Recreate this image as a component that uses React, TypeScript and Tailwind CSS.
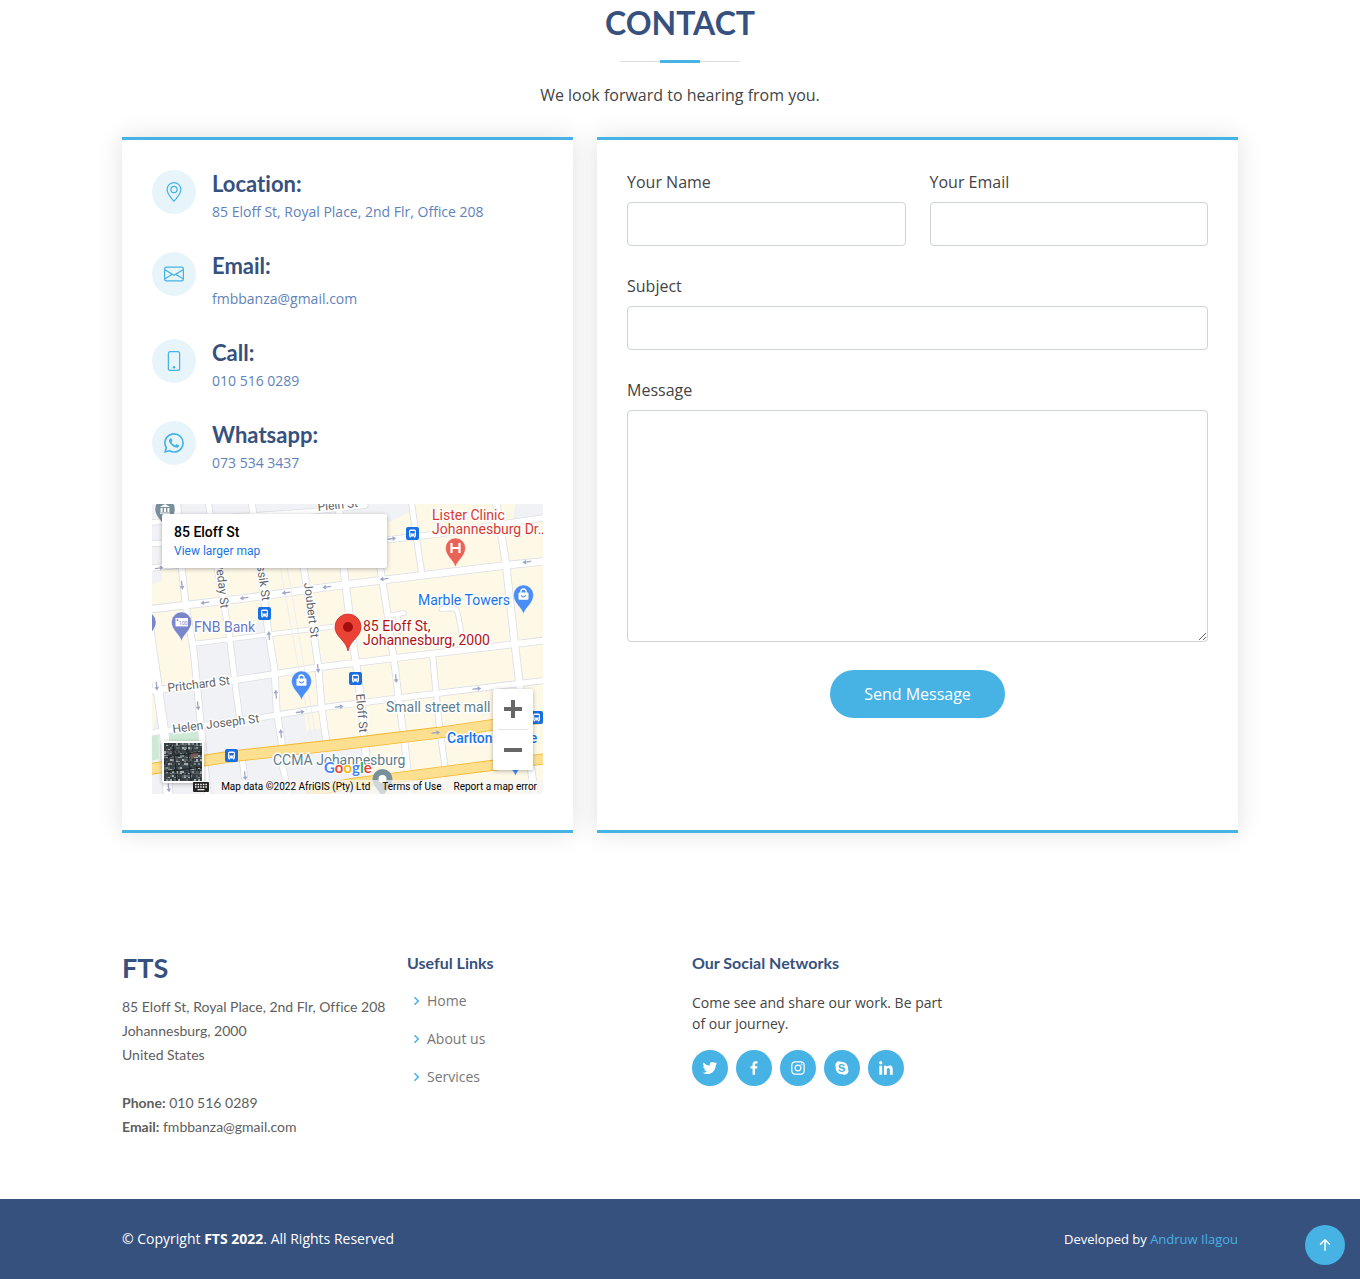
import type { ReactNode } from "react";
import {
  BsArrowUpShort,
  BsEnvelope,
  BsGeoAlt,
  BsPhone,
  BsWhatsapp,
} from "react-icons/bs";
import {
  BiChevronRight,
  BiLogoFacebook,
  BiLogoInstagram,
  BiLogoLinkedin,
  BiLogoSkype,
  BiLogoTwitter,
} from "react-icons/bi";

const contacts = [
  { icon: BsGeoAlt, title: "Location:", text: "85 Eloff St, Royal Place, 2nd Flr, Office 208", gap: "mt-1" },
  { icon: BsEnvelope, title: "Email:", text: "fmbbanza@gmail.com", gap: "mt-[9px]" },
  { icon: BsPhone, title: "Call:", text: "010 516 0289", gap: "mt-1" },
  { icon: BsWhatsapp, title: "Whatsapp:", text: "073 534 3437", gap: "mt-1" },
];

const socials = [
  { icon: BiLogoTwitter, label: "Twitter" },
  { icon: BiLogoFacebook, label: "Facebook" },
  { icon: BiLogoInstagram, label: "Instagram" },
  { icon: BiLogoSkype, label: "Skype" },
  { icon: BiLogoLinkedin, label: "LinkedIn" },
];

// Road geometry is drawn at three times the map's size and scaled down.
const roads = [
  { d: "M0 55 L480 22 L640 5", w: 14 },
  { d: "M0 118 L700 108 L860 90 L1060 58 L1173 42", w: 16 },
  { d: "M0 192 L80 184", w: 16 },
  { d: "M120 420 L360 390 L560 366", w: 12 },
  { d: "M0 560 L250 528 L500 490 L730 462 L1090 420 L1173 410", w: 18 },
  { d: "M0 686 L330 640 L520 610 L740 582 L1173 530", w: 16 },
  { d: "M-8 380 L18 560 L38 700 L48 870", w: 26 },
  { d: "M76 0 L90 200 L102 310 L125 440 L150 700 L168 880", w: 18 },
  { d: "M170 0 L195 190 L230 380 L252 560 L264 650", w: 16 },
  { d: "M300 0 L325 200 L347 370 L368 500 L374 620 L392 735", w: 18 },
  { d: "M438 100 L460 220 L498 480 L510 620 L524 720", w: 18 },
  { d: "M560 0 L576 200 L600 400 L614 490 L628 600 L644 780", w: 20 },
  { d: "M680 160 L702 300 L730 500 L740 582 L758 720 L775 870", w: 18 },
  { d: "M778 -10 L790 80 L808 200", w: 16 },
  { d: "M842 455 L860 650 L882 810", w: 16 },
  { d: "M1032 -10 L1062 180 L1086 400 L1105 560 L1135 780 L1150 880", w: 20 },
  { d: "M270 760 L284 870", w: 16 },
  { d: "M392 790 L412 870", w: 16 },
  { d: "M0 315 L270 284 L580 242 L830 212 L1060 184 L1173 172", w: 20 },
  { d: "M716 334 L756 327", w: 12 },
  { d: "M738 335 L742 382", w: 12 },
  { d: "M868 315 L904 313 Q914 315 918 330 L936 430", w: 12 },
];

const highways = [
  { d: "M-5 795 L240 757 L560 722 L860 686 L1180 640", w: 30 },
  { d: "M480 862 L600 838 L850 806 L1180 764", w: 28 },
];

const arrows = [
  [158, 296, 172], [276, 282, 172], [402, 266, 172], [524, 249, 172], [696, 225, 172], [1124, 174, 172],
  [22, 192, -8], [720, 104, -8], [90, 244, 84], [14, 547, 84], [138, 606, 84], [351, 394, -96],
  [372, 570, -96], [387, 688, -96], [498, 494, 84], [732, 524, 84], [445, 624, -7], [562, 608, -7],
  [975, 554, -7], [852, 686, -7], [279, 816, 84], [50, 852, 84],
];

function Pin({ x, y, color, children }: { x: number; y: number; color: string; children?: ReactNode }) {
  return (
    <g transform={`translate(${x} ${y})`}>
      <path d="M0 29 C-2 22 -10 18 -10 10 A10 10 0 0 1 10 10 C10 18 2 22 0 29 Z" fill={color} stroke="#fff" strokeWidth="0.4" />
      {children}
    </g>
  );
}

function Bus({ x, y }: { x: number; y: number }) {
  return (
    <g transform={`translate(${x} ${y})`}>
      <rect width="13" height="13" rx="2" fill="#1a6fe0" />
      <path d="M3 4.2 Q3 2.6 4.6 2.6 H8.4 Q10 2.6 10 4.2 V9.5 H9.2 V10.6 H8 V9.5 H5 V10.6 H3.8 V9.5 H3 Z" fill="#fff" />
      <path d="M4.2 4 H8.8 V6.4 H4.2 Z M4.2 7.6 h1 v1 h-1 Z M7.8 7.6 h1 v1 h-1 Z" fill="#1a6fe0" />
    </g>
  );
}

function Bag() {
  return (
    <g>
      <path d="M-2.6 8 V6.6 A2.6 2.6 0 0 1 2.6 6.6 V8" fill="none" stroke="#fff" strokeWidth="1.3" />
      <rect x="-5" y="7.4" width="10" height="7.4" rx="1" fill="#fff" />
      <path d="M-2.4 10.4 Q0 13.6 2.4 10.4" fill="none" stroke="#4a8df6" strokeWidth="1.1" />
    </g>
  );
}

function MapCanvas() {
  return (
    <svg
      viewBox="0 0 391 290"
      preserveAspectRatio="xMidYMid slice"
      className="block h-full w-full"
      role="img"
      aria-label="Map of 85 Eloff St, Johannesburg"
    >
      <g transform="scale(0.33333)">
        <rect width="1173" height="870" fill="#fef8e7" />
        <g fill="#f0f2f5">
          <path d="M0 0 H780 V20 L700 60 L0 120 Z" />
          <path d="M0 100 H60 V180 L0 190 Z M0 200 L30 200 V230 L0 240 Z" />
          <path d="M1090 0 H1173 V48 L1080 60 Z" />
          <path d="M120 430 L235 412 L345 340 L370 640 L520 612 L530 720 L640 720 L650 870 L0 870 L0 690 L30 560 L132 545 Z" />
        </g>
        <path d="M240 335 L345 320 L346 345 L240 380 Z" fill="#fef8e7" />
        <path d="M458 625 L515 615 L520 672 L462 680 Z" fill="#fef8e7" />
        <path d="M650 740 L1173 700 V870 H655 Z" fill="#fef8e7" />
        <path d="M0 694 H20 V765 L0 770 Z M52 686 L140 676 V730 H58 Z" fill="#ceead6" />
        <g fill="none" strokeLinejoin="round" strokeLinecap="round">
          {roads.map((r) => (
            <path key={r.d} d={r.d} stroke="#dcdfe5" strokeWidth={r.w + 5} />
          ))}
          {roads.map((r) => (
            <path key={r.d} d={r.d} stroke="#ffffff" strokeWidth={r.w} />
          ))}
          <path d="M385 190 L405 300 L430 440 L470 650 L488 748 M405 190 L425 300 L448 440 L484 650 L500 748" stroke="#eceef1" strokeWidth="3" />
          {highways.map((r) => (
            <path key={r.d} d={r.d} stroke="#f6b62f" strokeWidth={r.w + 5} />
          ))}
          {highways.map((r) => (
            <path key={r.d} d={r.d} stroke="#fde08f" strokeWidth={r.w} />
          ))}
          {arrows.map(([x, y, a]) => (
            <g key={`${x}-${y}`} transform={`translate(${x} ${y}) rotate(${a})`}>
              <path d="M-12 0 H4" stroke="#a0a6c8" strokeWidth="4" />
              <path d="M2 -7 L13 0 L2 7 Z" fill="#a0a6c8" />
            </g>
          ))}
        </g>
      </g>

      <Pin x={13} y={-5} color="#78909c">
        <path d="M-5 8 L0 5 L5 8 Z M-4.4 9 h2 v4 h-2 Z M-1 9 h2 v4 h-2 Z M2.4 9 h2 v4 h-2 Z M-5 13.6 h10 v1.2 h-10 Z" fill="#fff" />
      </Pin>
      <Pin x={-6} y={108} color="#7986cb" />
      <Pin x={29.5} y={108} color="#7986cb">
        <rect x="-6" y="6" width="12.5" height="8.4" fill="#fff" />
        <circle cx="-4" cy="8" r="0.9" fill="#7986cb" />
        <text x="-2.4" y="12.8" fontSize="5" fill="#7986cb">100</text>
      </Pin>
      <Pin x={149.5} y={167} color="#4a8df6"><Bag /></Pin>
      <Pin x={371.5} y={81} color="#4a8df6"><Bag /></Pin>
      <Pin x={303.5} y={34} color="#ea6358">
        <path d="M-4 5 V15 M4 5 V15 M-4 10 H4" fill="none" stroke="#fff" strokeWidth="2.2" />
      </Pin>
      <Pin x={363.5} y={243} color="#4a8df6" />
      <g transform="translate(230.5 265)">
        <path d="M0 29 C-2 22 -10 18 -10 10 A10 10 0 0 1 10 10 C10 18 2 22 0 29 Z" fill="#78909c" />
        <circle cx="0" cy="10" r="4" fill="#fff" />
      </g>
      <Bus x={254} y={23} />
      <Bus x={106} y={103} />
      <Bus x={197} y={168} />
      <Bus x={73} y={245} />
      <Bus x={378} y={207} />

      <g stroke="#ffffff" strokeWidth="3" strokeLinejoin="round" paintOrder="stroke" className="font-['Roboto',sans-serif]">
        <g fontSize="12" fill="#5f6368">
          <text transform="translate(166 7) rotate(-6)">Plein St</text>
          <text transform="translate(64 60) rotate(84)">veday St</text>
          <text transform="translate(105 62) rotate(82)">ssik St</text>
          <text transform="translate(152 79) rotate(83)">Joubert St</text>
          <text transform="translate(204 190) rotate(85)">Eloff St</text>
          <text transform="translate(16 188) rotate(-7)">Pritchard St</text>
          <text transform="translate(21 229) rotate(-7)">Helen Joseph St</text>
        </g>
        <g fontSize="14">
          <text x="280" y="16" fill="#d93a32">Lister Clinic</text>
          <text x="280" y="30" fill="#d93a32">Johannesburg Dr…</text>
          <text x="266" y="101" fill="#1a73e8">Marble Towers</text>
          <text x="42" y="128" fill="#6b78c4">FNB Bank</text>
          <text x="211" y="127" fill="#b31412">85 Eloff St,</text>
          <text x="211" y="141" fill="#b31412">Johannesburg, 2000</text>
          <text x="234" y="208" fill="#607d8b">Small street mall</text>
          <text x="121" y="261" fill="#607d8b">CCMA Johannesburg</text>
          <text x="295" y="239" fill="#1a73e8" fontWeight="500">Carlton Centre</text>
        </g>
      </g>

      <g>
        <path d="M196 147 C194 136 183 133 183 123 A13 13 0 0 1 209 123 C209 133 198 136 196 147 Z" fill="#ea4335" stroke="#c5221f" strokeWidth="0.7" />
        <circle cx="196" cy="123" r="5" fill="#a50e0e" />
      </g>
      <text x="172" y="269" fontSize="15" stroke="#ffffff" strokeWidth="2" paintOrder="stroke" className="font-['Lato',sans-serif] font-bold">
        <tspan fill="#4285f4">G</tspan>
        <tspan fill="#ea4335">o</tspan>
        <tspan fill="#fbbc04">o</tspan>
        <tspan fill="#4285f4">g</tspan>
        <tspan fill="#34a853">l</tspan>
        <tspan fill="#ea4335">e</tspan>
      </text>
    </svg>
  );
}

function SatelliteThumb() {
  const cells = Array.from({ length: 19 * 19 }, (_, i) => i);
  const shades = ["#3b464b", "#56646b", "#262c30", "#7b8c8e", "#3f4a4e", "#a3adac", "#30383c", "#5d5a59"];
  return (
    <svg viewBox="0 0 38 38" className="block h-full w-full" aria-hidden="true">
      <rect width="38" height="38" fill="#394246" />
      {cells.map((i) => {
        const x = i % 19;
        const y = Math.floor(i / 19);
        const k = (x * 7 + y * 13 + x * y * 5 + ((x * x + y * 3) % 11)) % shades.length;
        return <rect key={i} x={x * 2} y={y * 2} width={1 + (k % 2)} height={1 + ((k + y) % 2)} fill={shades[k]} />;
      })}
      <path d="M27 9 h7 v5 h-5 v2 h-2 Z" fill="#7d5b58" />
      <path d="M9 0 L13 38 M23 0 L27 38 M0 14 L38 9 M0 29 L38 24" stroke="#1b2023" strokeWidth="1" />
    </svg>
  );
}

function KeyboardIcon() {
  return (
    <svg viewBox="0 0 16 10" className="h-[10px] w-4" aria-hidden="true">
      <rect width="16" height="10" rx="1" fill="#222" />
      <path d="M2 2.5 h12 M2 5 h12" stroke="#fff" strokeWidth="1.4" strokeDasharray="1.5 1.1" />
      <path d="M4.5 7.7 h7" stroke="#fff" strokeWidth="1.2" />
    </svg>
  );
}

function LocationMap() {
  return (
    <div className="relative mt-[31px] mb-[6px] h-[290px] w-full overflow-hidden font-['Roboto',sans-serif]">
      <MapCanvas />
      <div className="absolute top-[10px] left-[10px] h-[54px] w-[225px] rounded-xs bg-white px-3 pt-2 shadow-[0_1px_4px_rgba(0,0,0,0.3)]">
        <p className="text-[14px] leading-5 font-medium text-black">85 Eloff St</p>
        <a href="#map" className="block text-[12px] leading-[18px] text-[#1a73e8]">View larger map</a>
      </div>
      <div className="absolute right-[10px] bottom-6 flex w-10 flex-col items-center rounded-xs bg-white shadow-[0_1px_4px_rgba(0,0,0,0.3)]">
        <button type="button" aria-label="Zoom in" className="flex h-10 w-full items-center justify-center">
          <svg viewBox="0 0 18 18" className="size-[18px]" fill="#666"><path d="M7 0h4v7h7v4h-7v7H7v-7H0V7h7z" /></svg>
        </button>
        <div className="h-px w-[30px] bg-[#e6e6e6]" />
        <button type="button" aria-label="Zoom out" className="flex h-10 w-full items-center justify-center">
          <svg viewBox="0 0 18 18" className="size-[18px]" fill="#666"><path d="M0 7h18v4H0z" /></svg>
        </button>
      </div>
      <button
        type="button"
        aria-label="Show satellite imagery"
        className="absolute bottom-[11px] left-[10px] size-[42px] rounded-xs border-2 border-white shadow-[0_1px_4px_rgba(0,0,0,0.3)]"
      >
        <SatelliteThumb />
      </button>
      <div className="absolute right-0 bottom-0 flex h-[14px] items-center text-[10px] leading-[14px] text-black">
        <button type="button" aria-label="Keyboard shortcuts" className="mr-1.5"><KeyboardIcon /></button>
        <span className="bg-[#f5f5f5]/70 px-1.5">Map data ©2022 AfriGIS (Pty) Ltd</span>
        <a href="#terms" className="bg-[#f5f5f5]/70 px-1.5">Terms of Use</a>
        <a href="#report" className="bg-[#f5f5f5]/70 px-1.5">Report a map error</a>
      </div>
    </div>
  );
}

function Field({ id, label, type = "text" }: { id: string; label: string; type?: string }) {
  return (
    <div>
      <label htmlFor={id} className="block pb-2 text-base">{label}</label>
      <input
        id={id}
        type={type}
        className="block h-11 w-full rounded border border-[#ced4da] bg-white px-3 text-sm outline-none focus:border-[#47b2e4]"
      />
    </div>
  );
}

const card =
  "border-y-[3px] border-[#47b2e4] bg-white p-[30px] shadow-[0_0_24px_0_rgba(0,0,0,0.12)]";

export default function App() {
  return (
    <div className="min-h-screen bg-white font-['Open_Sans',sans-serif] text-base text-[#444444]">
      <section id="contact" className="mx-auto max-w-[1140px] px-3 pt-1">
        <header className="pb-[30px] text-center">
          <h2 className="font-['Lato',sans-serif] text-[32px] leading-[38px] font-bold text-[#37517e]">CONTACT</h2>
          <div className="mt-[18px] mb-5 flex items-center justify-center">
            <span className="h-px w-10 bg-[#dddddd]" />
            <span className="h-[3px] w-10 bg-[#47b2e4]" />
            <span className="h-px w-10 bg-[#dddddd]" />
          </div>
          <p>We look forward to hearing from you.</p>
        </header>

        <div className="grid grid-cols-1 gap-6 lg:grid-cols-12">
          <div className={`${card} lg:col-span-5`}>
            <ul className="flex flex-col gap-[30px]">
              {contacts.map(({ icon: Icon, title, text, gap }) => (
                <li key={title} className="flex gap-4">
                  <span className="flex size-11 shrink-0 items-center justify-center rounded-full bg-[#e7f5fb] text-[#47b2e4]">
                    <Icon size={20} />
                  </span>
                  <div>
                    <h4 className="font-['Lato',sans-serif] text-[22px] leading-[27px] font-bold text-[#37517e] [font-variant-ligatures:none]">{title}</h4>
                    <p className={`${gap} text-sm leading-[21px] text-[#6182ba]`}>{text}</p>
                  </div>
                </li>
              ))}
            </ul>
            <LocationMap />
          </div>

          <form className={`${card} lg:col-span-7`} onSubmit={(e) => e.preventDefault()}>
            <div className="flex flex-col gap-7">
              <div className="grid grid-cols-1 gap-6 md:grid-cols-2">
                <Field id="name" label="Your Name" />
                <Field id="email" label="Your Email" type="email" />
              </div>
              <Field id="subject" label="Subject" />
              <div>
                <label htmlFor="message" className="block pb-2">Message</label>
                <textarea
                  id="message"
                  className="block h-[232px] w-full rounded border border-[#ced4da] bg-white px-3 py-2.5 text-sm outline-none focus:border-[#47b2e4]"
                />
              </div>
              <button type="submit" className="self-center rounded-full bg-[#47b2e4] px-[34px] py-3 text-white">
                Send Message
              </button>
            </div>
          </form>
        </div>
      </section>

      <footer className="mt-[60px]">
        <div className="mx-auto grid max-w-[1140px] grid-cols-1 gap-6 px-3 pt-[60px] pb-[60px] md:grid-cols-4">
          <div className="leading-6 text-[#5e5e5e]">
            <h3 className="mb-3 font-['Lato',sans-serif] text-[27px] leading-[30px] font-bold text-[#37517e]">FTS</h3>
            <p className="font-['Lato',sans-serif] text-[14px] leading-6 whitespace-nowrap [font-variant-ligatures:none]">
              85 Eloff St, Royal Place, 2nd Flr, Office 208 <br />
              Johannesburg, 2000
              <br />
              United States <br />
              <br />
              <strong>Phone:</strong> 010 516 0289
              <br />
              <strong>Email:</strong> fmbbanza@gmail.com
            </p>
          </div>

          <nav aria-label="Useful links">
            <h4 className="pb-[10px] font-['Lato',sans-serif] text-base leading-[19px] font-bold text-[#37517e]">Useful Links</h4>
            <ul className="flex flex-col text-sm text-[#777777]">
              {["Home", "About us", "Services"].map((item) => (
                <li key={item} className="flex h-[38px] items-center">
                  <BiChevronRight size={18} className="mr-0.5 text-[#47b2e4]" />
                  <a href="#contact">{item}</a>
                </li>
              ))}
            </ul>
          </nav>

          <div>
            <h4 className="font-['Lato',sans-serif] text-base leading-[19px] font-bold text-[#37517e] [font-variant-ligatures:none]">Our Social Networks</h4>
            <p className="mt-5 text-sm leading-[21px]">Come see and share our work. Be part of our journey.</p>
            <div className="mt-4 flex gap-2">
              {socials.map(({ icon: Icon, label }) => (
                <a
                  key={label}
                  href="#contact"
                  aria-label={label}
                  className="flex size-9 items-center justify-center rounded-full bg-[#47b2e4] text-white"
                >
                  <Icon size={18} />
                </a>
              ))}
            </div>
          </div>
        </div>

        <div className="bg-[#37517e] text-white">
          <div className="mx-auto flex max-w-[1140px] flex-wrap items-center justify-between px-3 py-[30px]">
            <p className="text-sm leading-5">
              © Copyright <strong>FTS 2022</strong>. All Rights Reserved
            </p>
            <p className="text-[13px] leading-5">
              Developed by <a href="#author" className="text-[#47b2e4]">Andruw Ilagou</a>
            </p>
          </div>
        </div>
      </footer>

      <a
        href="#contact"
        aria-label="Back to top"
        className="fixed right-[15px] bottom-[14px] flex size-10 items-center justify-center rounded-full bg-[#47b2e4] text-white"
      >
        <BsArrowUpShort size={24} />
      </a>
    </div>
  );
}
